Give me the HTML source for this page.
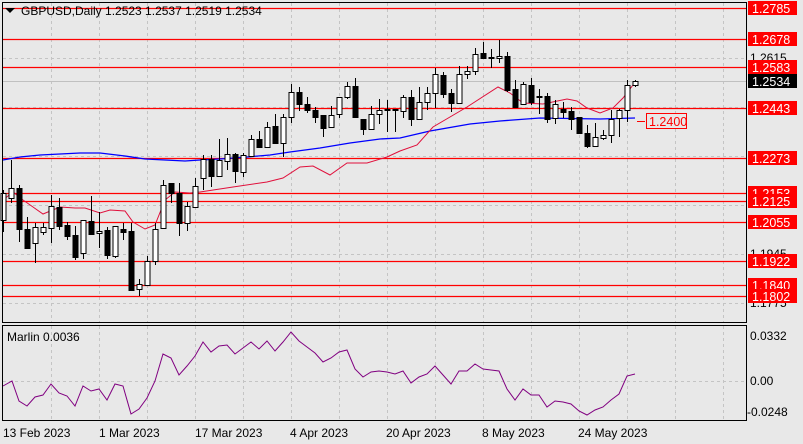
<!DOCTYPE html>
<html><head><meta charset="utf-8"><style>
html,body{margin:0;padding:0;background:#e8e8e8;}
svg{display:block;font-family:"Liberation Sans",sans-serif;}
</style></head><body>
<svg id="s" width="803" height="444" viewBox="0 0 803 444" xmlns="http://www.w3.org/2000/svg">
<rect width="803" height="444" fill="#e8e8e8"/>
<g id="grid" stroke="#c4c4c4" stroke-dasharray="3,3" stroke-width="1"></g>
<g id="lv"></g>
<g id="ma"></g>
<g id="c"></g>
<g id="lab"></g>
<rect x="2.5" y="2.5" width="744" height="320" fill="none" stroke="#000"/>
<rect x="2.5" y="325.5" width="744" height="95" fill="none" stroke="#000"/>
<polygon points="5,8 15,8 10,13" fill="#000"/>
<text x="21" y="15" font-size="12" fill="#000">GBPUSD,Daily  1.2523 1.2537 1.2519 1.2534</text>
<text x="7" y="341" font-size="12" fill="#000">Marlin 0.0036</text>
<g font-size="12" fill="#000">
<text x="750" y="340">0.0332</text>
<text x="750" y="385">0.00</text>
<text x="747" y="416">-0.0248</text>
<text x="3" y="437">13 Feb 2023</text>
<text x="99" y="437">1 Mar 2023</text>
<text x="195" y="437">17 Mar 2023</text>
<text x="290" y="437">4 Apr 2023</text>
<text x="386" y="437">20 Apr 2023</text>
<text x="482" y="437">8 May 2023</text>
<text x="578" y="437">24 May 2023</text>
</g>
</svg>
<script>
var NS="http://www.w3.org/2000/svg";
function el(p,t,a,txt){var e=document.createElementNS(NS,t);for(var k in a)e.setAttribute(k,a[k]);if(txt)e.textContent=txt;document.getElementById(p).appendChild(e);return e;}
[51,99,147,195,243,291,339,387,435,483,531,579,627,675,723].forEach(function(x){el('grid','line',{x1:x+.5,y1:3,x2:x+.5,y2:322});el('grid','line',{x1:x+.5,y1:326,x2:x+.5,y2:420});});
[58,107,156,205,254,303].forEach(function(y){el('grid','line',{x1:3,y1:y+.5,x2:746,y2:y+.5});});
el('grid','line',{x1:3,y1:381.5,x2:746,y2:381.5});
el('lv','line',{x1:3,y1:81.5,x2:746,y2:81.5,stroke:'#c0c0c0'});
var lv=[[8,'1.2785'],[39,'1.2678'],[67,'1.2583'],[108,'1.2443'],[158,'1.2273'],[193,'1.2153'],[201,'1.2125'],[222,'1.2055'],[261,'1.1922'],[285,'1.1840'],[296,'1.1802']];
[[58,'1.2615'],[254,'1.1945'],[303,'1.1775']].forEach(function(a){el('lab','text',{x:750,y:a[0]+4,'font-size':12,fill:'#000'},a[1]);});
lv.forEach(function(a){el('lv','line',{x1:3,y1:a[0]+.5,x2:746,y2:a[0]+.5,stroke:'#ff0000','stroke-width':1.3});
el('lab','rect',{x:748,y:a[0]-7,width:49,height:14,fill:'#ff0000'});
el('lab','text',{x:752,y:a[0]+5,'font-size':12.5,fill:'#fff'},a[1]);});
el('lab','rect',{x:748,y:74,width:49,height:14,fill:'#000'});
el('lab','text',{x:752,y:86,'font-size':12.5,fill:'#fff'},'1.2534');
el('lab','line',{x1:637,y1:121.5,x2:645,y2:121.5,stroke:'#f00'});
el('lab','rect',{x:646.5,y:113.5,width:40,height:15,fill:'#e8e8e8',stroke:'#f00'});
el('lab','text',{x:649,y:126,'font-size':12.5,fill:'#f00'},'1.2400');
el('ma','polyline',{fill:'none',stroke:'#0000ff','stroke-width':1.3,points:'3,160 20,157 40,155 60,154 80,153 100,153 125,156 145,159 165,160 185,161 200,160 220,159 247,157 270,155 290,152 320,148 350,143 380,139 400,138 430,131 470,124 500,121 540,118 600,119 635,118'});
el('ma','polyline',{fill:'none',stroke:'#e0103c','stroke-width':1,points:'3,200 13,192 23,200 33,207 43,214 60,207 75,208 85,208 100,213 110,210 125,211 133,222 145,229 155,225 165,200 175,192 190,193 200,192 233,187 267,182 283,178 300,167 313,166 330,175 347,163 367,163 387,157 400,151 417,145 433,127 467,107 498,87 510,93 523,103 543,104 567,99 577,101 587,108 600,113 613,108 623,98 633,85'});
el('ma','polyline',{fill:'none',stroke:'#800080','stroke-width':1,points:'3,386 12,381 19,401 27,406 35,397 43,395 51,384 59,393 67,396 75,406 83,386 91,391 99,389 107,400 115,384 123,386 131,414 139,409 147,398 155,381 163,354 171,358 179,375 187,366 195,356 203,342 211,352 219,346 227,345 235,354 243,348 251,342 259,349 267,341 275,351 283,342 291,332 299,341 307,347 315,353 323,362 331,358 339,352 347,350 355,369 363,377 371,372 379,371 387,372 395,374 403,371 411,383 419,377 427,374 435,366 443,375 451,384 459,371 467,371 475,364 483,369 491,370 499,371 507,389 515,400 523,389 531,395 539,395 547,407 555,401 563,402 571,404 579,411 587,415 595,410 603,407 611,400 619,394 627,376 635,374'});
var C=[[193,220,190,232,1],[188,198,160,203,1],[188,229,185,242,0],[229,248,217,248,0],[227,243,223,263,1],[227,232,223,235,1],[206,228,195,243,1],[207,226,198,230,0],[225,236,222,240,0],[235,257,226,260,0],[220,253,220,259,1],[221,234,196,235,0],[231,233,212,248,1],[230,255,227,259,0],[226,256,226,258,1],[229,232,223,240,0],[231,290,223,291,0],[284,289,279,296,1],[261,285,256,286,1],[229,261,223,265,1],[185,228,180,228,1],[183,193,183,203,0],[193,223,183,236,0],[206,223,202,231,1],[186,207,178,207,1],[159,178,155,190,1],[159,176,155,187,0],[160,176,139,177,1],[154,161,138,170,1],[154,171,153,183,0],[155,172,153,177,1],[139,156,135,157,1],[139,147,131,148,0],[127,147,122,148,1],[126,143,114,143,0],[117,143,114,157,1],[92,117,84,123,1],[92,104,87,111,0],[104,110,97,113,0],[110,117,107,123,0],[115,128,115,137,0],[115,127,106,122,1],[97,114,97,118,1],[86,97,82,99,1],[86,117,78,117,0],[119,129,119,135,0],[114,129,106,129,1],[110,114,99,124,1],[109,110,100,132,0],[109,110,110,132,0],[97,111,95,118,1],[97,119,90,126,0],[102,119,87,119,1],[93,102,87,110,1],[74,93,68,108,1],[75,94,72,98,0],[93,103,89,112,0],[74,103,66,103,1],[71,74,66,79,1],[54,71,48,75,1],[53,58,42,59,0],[57,58,49,68,0],[56,58,40,63,1],[56,90,52,92,0],[89,107,80,107,0],[84,104,82,105,1],[85,102,78,105,0],[96,97,89,114,0],[96,119,93,123,0],[104,118,100,124,1],[109,112,102,118,0],[111,119,107,130,0],[117,133,117,133,0],[133,146,125,148,0],[137,146,123,147,1],[135,138,130,140,1],[119,135,110,143,1],[110,118,109,137,1],[85,110,80,122,1],[81,85,80,87,1]];
C.forEach(function(c,i){var x=3+8*i+.5;
el('c','line',{x1:x,y1:c[2],x2:x,y2:c[3],stroke:'#000'});
var h=Math.max(c[1]-c[0],1);
el('c','rect',{x:x-2.5,y:c[0]+.5,width:5,height:h,fill:c[4]?'#fff':'#000',stroke:'#000','stroke-width':1});});
</script>
</body></html>
